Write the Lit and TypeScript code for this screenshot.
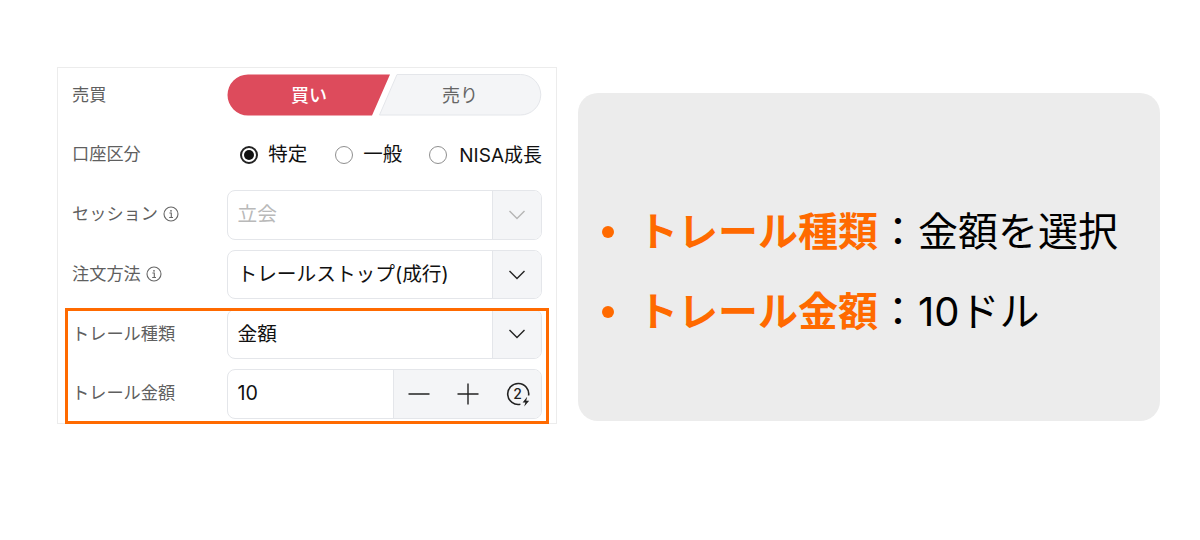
import { LitElement, html, css, svg } from "lit";
import { customElement } from "lit/decorators.js";

const chevron = html`<svg class="chev" viewBox="0 0 18 10" width="18" height="10"><path d="M1.5 1 L9 8.6 L16.5 1" fill="none" stroke="currentColor" stroke-width="1.4"/></svg>`;
const info = html`<svg class="info" viewBox="0 0 16 16" width="16" height="16"><circle cx="8" cy="8" r="7" fill="none" stroke="#666" stroke-width="1.1"/><path d="M6.4 7 H8.3 V11.4 M6.2 11.5 H10" fill="none" stroke="#666" stroke-width="1.1"/><circle cx="8" cy="4.8" r="0.9" fill="#666"/></svg>`;

@customElement("app-root")
export class AppRoot extends LitElement {
  static styles = css`
    :host {
      display: block;
      width: 1200px;
      height: 540px;
      background: #fff;
      font-family: Inter, "Noto Sans CJK JP", sans-serif;
      color: #111;
    }
    .page {
      display: flex;
      align-items: flex-start;
      padding: 67px 0 0 57px;
      box-sizing: border-box;
      height: 540px;
    }
    .panel {
      position: relative;
      box-sizing: border-box;
      width: 500px;
      height: 357px;
      border: 1px solid #ececec;
      padding: 6px 14px 0;
      display: flex;
      flex-direction: column;
      gap: 10px;
    }
    .row {
      display: grid;
      grid-template-columns: 155px 315px;
      align-items: center;
      height: 49.7px;
    }
    .row.seg-row { height: 42px; }
    .row.radio-row { height: 42px; margin: 8px 0 4px; }
    .label {
      display: flex;
      align-items: center;
      gap: 5px;
      font-size: 17.2px;
      color: #5f5f5f;
      line-height: 1;
      padding-bottom: 2px;
    }
    .seg-row .label { padding-bottom: 0; }
    .info { display: block; }

    .seg {
      position: relative;
      height: 42px;
      width: 315px;
      display: grid;
      grid-template-columns: 164px 151px;
      align-items: center;
      text-align: center;
      font-size: 18px;
    }
    .seg svg { position: absolute; left: 0; top: 0; }
    .seg span { position: relative; padding-bottom: 2px; }
    .buy { color: #fff; font-weight: 500; }
    .sell { color: #666; padding-right: 13px; }

    .radios {
      display: flex;
      justify-content: flex-end;
      gap: 28px;
    }
    .radio {
      display: flex;
      align-items: center;
      gap: 10px;
      font-size: 19.5px;
      line-height: 1;
    }
    .radio.latin { gap: 12px; font-size: 19px; margin-left: -1px; }
    .dot {
      box-sizing: border-box;
      width: 18px;
      height: 18px;
      border-radius: 50%;
      border: 1px solid #8f8f8f;
      background: #fff;
    }
    .dot.on {
      border: 2px solid #222;
      display: flex;
      align-items: center;
      justify-content: center;
    }
    .dot.on::after {
      content: "";
      width: 10px;
      height: 10px;
      border-radius: 50%;
      background: #111;
    }

    .field {
      box-sizing: border-box;
      height: 49.7px;
      width: 315px;
      border: 1px solid #e4e6ea;
      border-radius: 8px;
      display: flex;
      overflow: hidden;
      font-size: 19.7px;
      background: #fff;
    }
    .value {
      flex: 1;
      display: flex;
      align-items: center;
      padding: 0 0 4px 9.5px;
    }
    .value.num { padding-bottom: 2px; }
    .addon {
      box-sizing: border-box;
      width: 49px;
      background: #f4f5f7;
      border-left: 1px solid #e4e6ea;
      display: flex;
      align-items: center;
      justify-content: center;
      color: #222;
    }
    .chev { display: block; }
    .disabled .value { color: #b9b9b9; }
    .disabled .addon { color: #b5b5b5; }
    .steppers {
      box-sizing: border-box;
      width: 148px;
      background: #f4f5f7;
      border-left: 1px solid #e4e6ea;
      display: grid;
      grid-template-columns: 49px 50px 49px;
      align-items: center;
      justify-items: center;
    }
    .steppers svg { display: block; }

    .highlight {
      position: absolute;
      left: 7px;
      top: 240px;
      width: 484px;
      height: 116px;
      box-sizing: border-box;
      border: 3px solid #ff6a00;
      pointer-events: none;
    }

    .card {
      box-sizing: border-box;
      width: 582px;
      height: 328px;
      margin: 26px 0 0 21px;
      border-radius: 20px;
      background: #ececec;
      display: flex;
      flex-direction: column;
      justify-content: center;
      gap: 30px;
      padding: 30px 0 0 22px;
      font-size: 40px;
      line-height: 50px;
      color: #000;
    }
    .line { display: flex; align-items: center; }
    .bullet {
      width: 12px;
      height: 12px;
      border-radius: 50%;
      background: #ff6a00;
      margin: 0 24px 0 2px;
    }
    .line b { color: #ff6a00; font-weight: 700; }
  `;

  private select(value: string, disabled = false) {
    return html`<div class="field ${disabled ? "disabled" : ""}">
      <div class="value">${value}</div>
      <div class="addon">${chevron}</div>
    </div>`;
  }

  render() {
    return html`<div class="page">
      <div class="panel">
        <div class="row seg-row">
          <div class="label">売買</div>
          <div class="seg">
            <svg width="315" height="42" viewBox="0 0 315 42">
              ${svg`<path d="M21 .5 H163 L145 41.5 H21 A20.5 20.5 0 0 1 21 .5 Z" fill="#dd4b5c"/>
              <path d="M170 .5 H293.5 A20 20 0 0 1 293.5 41 H152.5 Z" fill="#f4f5f7" stroke="#e4e6ea"/>`}
            </svg>
            <span class="buy">買い</span>
            <span class="sell">売り</span>
          </div>
        </div>
        <div class="row radio-row">
          <div class="label">口座区分</div>
          <div class="radios">
            <div class="radio"><i class="dot on"></i>特定</div>
            <div class="radio"><i class="dot"></i>一般</div>
            <div class="radio latin"><i class="dot"></i>NISA成長</div>
          </div>
        </div>
        <div class="row">
          <div class="label">セッション${info}</div>
          ${this.select("立会", true)}
        </div>
        <div class="row">
          <div class="label">注文方法${info}</div>
          ${this.select("トレールストップ(成行)")}
        </div>
        <div class="row">
          <div class="label">トレール種類</div>
          ${this.select("金額")}
        </div>
        <div class="row">
          <div class="label">トレール金額</div>
          <div class="field">
            <div class="value num">10</div>
            <div class="steppers">
              <svg width="22" height="22" viewBox="0 0 22 22"><path d="M0.5 11 H21.5" stroke="#222" stroke-width="1.4"/></svg>
              <svg width="22" height="22" viewBox="0 0 22 22"><path d="M0.5 11 H21.5 M11 0.5 V21.5" stroke="#222" stroke-width="1.4"/></svg>
              <svg width="26" height="26" viewBox="0 0 26 26">
                <path d="M23.6 14.5 A10.5 10.5 0 1 0 15.4 23.2" fill="none" stroke="#222" stroke-width="1.6"/>
                <text x="12.5" y="17.5" font-size="14" font-weight="500" text-anchor="middle" fill="#222" font-family="Inter, sans-serif">2</text>
                <path d="M22.2 15.8 L17.6 21.4 H20.4 L19.2 25.6 L24.2 19.8 H21.2 Z" fill="#222"/>
              </svg>
            </div>
          </div>
        </div>
        <div class="highlight"></div>
      </div>
      <div class="card">
        <div class="line"><i class="bullet"></i><span><b>トレール種類</b>：金額を選択</span></div>
        <div class="line"><i class="bullet"></i><span><b>トレール金額</b>：10ドル</span></div>
      </div>
    </div>`;
  }
}
